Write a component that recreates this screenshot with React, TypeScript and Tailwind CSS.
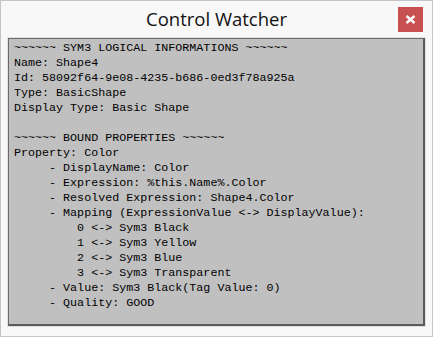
const lines = [
  '~~~~~~ SYM3 LOGICAL INFORMATIONS ~~~~~~',
  'Name: Shape4',
  'Id: 58092f64-9e08-4235-b686-0ed3f78a925a',
  'Type: BasicShape',
  'Display Type: Basic Shape',
  '',
  '~~~~~~ BOUND PROPERTIES ~~~~~~',
  'Property: Color',
  '     - DisplayName: Color',
  '     - Expression: %this.Name%.Color',
  '     - Resolved Expression: Shape4.Color',
  '     - Mapping (ExpressionValue <-> DisplayValue):',
  '         0 <-> Sym3 Black',
  '         1 <-> Sym3 Yellow',
  '         2 <-> Sym3 Blue',
  '         3 <-> Sym3 Transparent',
  '     - Value: Sym3 Black(Tag Value: 0)',
  '     - Quality: GOOD',
]

export default function App() {
  return (
    <div className="flex h-[337px] w-[433px] flex-col border border-[#c4c4c4] bg-[#f8f8f8]">
      <div className="relative flex h-[36px] items-center justify-center">
        <span className="text-[18.5px] leading-none text-[#111] [font-family:'Open_Sans',sans-serif]">Control Watcher</span>
        <button
          type="button"
          className="absolute right-[9px] top-[6px] flex h-[25px] w-[25px] items-center justify-center bg-[#c75050]"
        >
          <svg width="11" height="9" viewBox="0 0 11 9">
            <path d="M1.5 1 L9.5 8 M9.5 1 L1.5 8" stroke="#fff" strokeWidth="2.4" />
          </svg>
        </button>
      </div>
      <div className="mx-[6px] mb-[9px] flex-1 border border-[#e0e0e0]">
        <div className="h-full border-t border-l border-t-[#6a6a6a] border-l-[#6a6a6a] border-r-2 border-b-2 border-r-[#5a5a5a] border-b-[#5a5a5a] bg-[#c0c0c0] px-[5px] pt-[2px]">
          {lines.map((l, i) => (
            <div key={i} className="h-[15px] whitespace-pre text-[11.7px] leading-[15px] text-black [font-family:'Liberation_Mono',monospace]">
              {l}
            </div>
          ))}
        </div>
      </div>
    </div>
  )
}
